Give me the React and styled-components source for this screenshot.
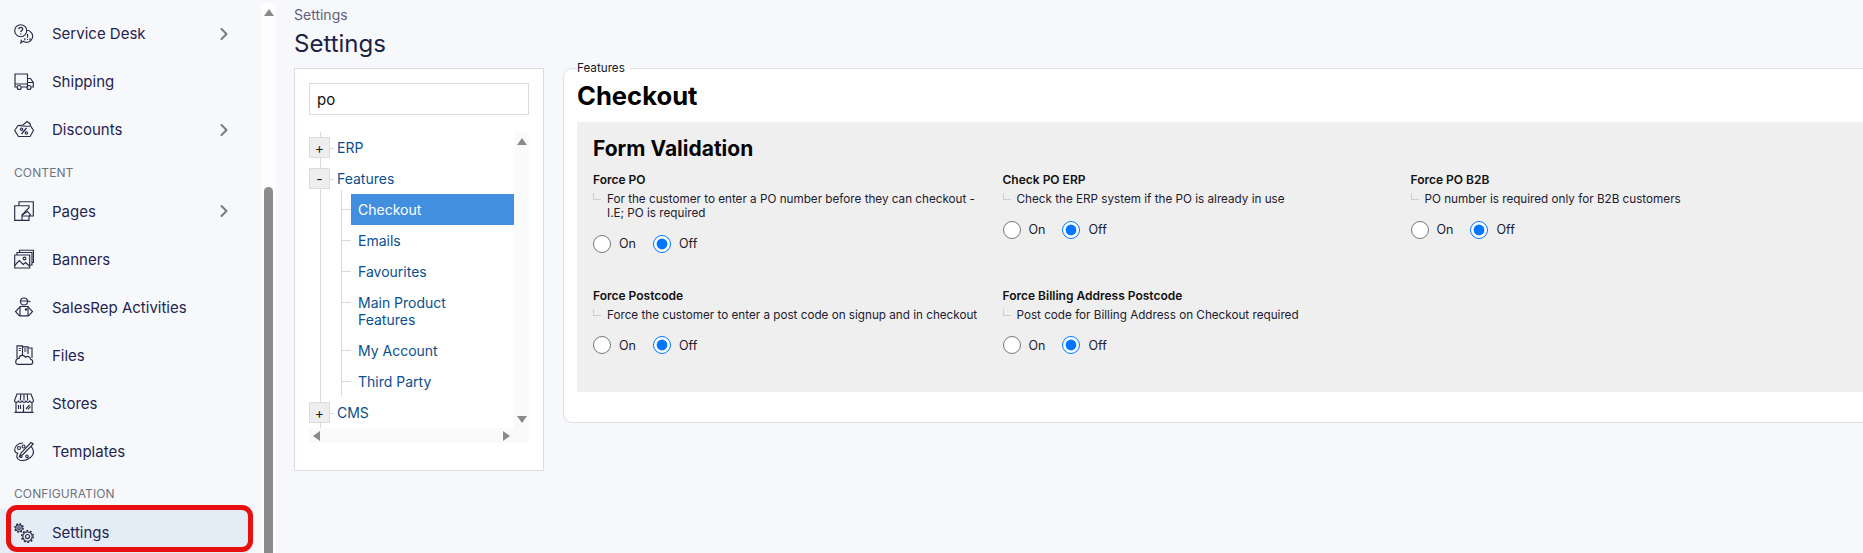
import React from "react";
import styled, { createGlobalStyle } from "styled-components";
import { ChevronRight } from "lucide-react";

const GlobalStyle = createGlobalStyle`
  html, body, #root {
    height: 100%;
    margin: 0;
    overflow: hidden;
  }
  body {
    background: #f7f8fb;
    font-family: Inter, "Liberation Sans", sans-serif;
  }
  * { box-sizing: border-box; }
`;

const icons = {
  service: (
    <>
      <circle cx="6.7" cy="6.7" r="6" />
      <path d="M4.8 5.2c0-2.4 3.9-2.4 3.9-.2 0 1.300-1.900 1.500-1.900 3M6.800 9.400v1" strokeWidth="1.300" />
      <path d="M12.800 6.300a6 6 0 1 1-3.500 11l-2.500 1.600.6-3.300" />
      <path d="M13.500 10v3.800M13.500 15v1M10.800 14.200v2M16 14.200v2" strokeWidth="1.200" />
    </>
  ),
  truck: (
    <>
      <path d="M3 15H1V2h12.500v13H7.500" />
      <path d="M13.500 6.500h3l2.800 4v4.500h-2M13.500 15h-0.500" />
      <path d="M13.500 10.500h5.800M1 12h12.500" />
      <circle cx="5.200" cy="15.500" r="2" />
      <circle cx="15" cy="15.500" r="2" />
    </>
  ),
  discount: (
    <>
      <path d="M0.700 10.500 4 5.500l5-.5 4-3.500 3 2.200 0.500 2 3 4.800-3.500 6H4.500z" />
      <path d="M4 5.500c3 .5 8 1 12.500.5" />
      <path d="M7.500 14l5-6" strokeWidth="1.300" />
      <circle cx="7.600" cy="9.200" r="1.200" />
      <circle cx="12.400" cy="13" r="1.200" />
    </>
  ),
  pages: (
    <>
      <path d="M5 4.500V0.700h14.300V15H15" />
      <path d="M0.700 4.700h14.300v2L8 14v5.300H0.700z" />
      <path d="M8 19.300h7V15" />
      <path d="M8 14l5.500-3.500 3 3.500-1.500 1H8" />
    </>
  ),
  banners: (
    <>
      <path d="M0.700 6h15v13h-15z" />
      <path d="M3 6V3.500h15V16h-2.300" />
      <path d="M5.500 3.500V1.200h14V13.500H18" />
      <path d="M0.700 16.500l4.500-5 4 4 2.500-2 3.500 3.500" />
      <circle cx="10.500" cy="9.500" r="1.400" />
    </>
  ),
  rep: (
    <>
      <circle cx="10" cy="4.500" r="3.500" />
      <path d="M6.500 4h7.500l2.500 0.800" />
      <path d="M6 9.500h8v9.300H6z" />
      <path d="M6 9.800 1.500 14.500l3.500 3.800h1M14 9.800l4.500 4.700-3.500 3.800h-1" />
      <circle cx="12" cy="12.500" r="0.700" />
    </>
  ),
  files: (
    <>
      <path d="M3 13V0.800h5.500V10M8.500 1.800h5.500V9M14 3h4v10" />
      <path d="M4.800 3.500h2M4.800 5.500h2M10 4h2.500M10 6h2.500" />
      <path d="M3.500 19.300h13c3 0 3-4.500 0-5 0-3-3.500-3.500-5-2-1.500-3-6-2.500-6.500 1-3.500 0-4.500 5.500-1.500 6z" />
    </>
  ),
  store: (
    <>
      <path d="M3 1h14l2.500 6.500c0 2.500-3.500 2.500-3.800 0 0 2.500-3.400 2.500-3.700 0 0 2.500-3.700 2.500-4 0 0 2.500-3.400 2.500-3.700 0 0 2.500-3.800 2.500-3.800 0z" />
      <path d="M6.800 1 6.300 7.500M10 1v6.500M13.200 1l.5 6.500" />
      <path d="M2 9.500v9.800h16V9.500M0.500 19.300h19" />
      <path d="M9.500 11.500v7.800M4.500 12v4M6.500 12v4M12 16l3.500-4M14 16.500l2.500-3" />
    </>
  ),
  palette: (
    <>
      <path d="M9 2C4 2 .7 5.500.7 9c0 2.500 2 3 3 3.200C2.500 14.500 2 18 6 19.300c4 .8 10-1 12.500-5 1.500-3 1-6.500-1.500-9" />
      <path d="M17 1.500 19.300 3 9 13.500l-3.500 2 1.500-3.500z" />
      <circle cx="5" cy="7" r="1.500" />
      <circle cx="9.500" cy="5.500" r="1.500" />
      <circle cx="7" cy="15.500" r="1.100" />
      <circle cx="13" cy="15.300" r="1.300" />
    </>
  ),
  settings: (
    <>
      <circle cx="5" cy="5" r="4.200" strokeWidth="1.500" strokeDasharray="1.650 1.650" />
      <circle cx="5" cy="5" r="3.200" />
      <circle cx="5" cy="5" r="1.300" />
      <circle cx="13.500" cy="13.500" r="5.800" strokeWidth="1.500" strokeDasharray="1.820 1.820" />
      <circle cx="13.500" cy="13.500" r="4.700" />
      <circle cx="13.500" cy="13.500" r="2" />
    </>
  ),
};

const NavIcon = ({ name }) => (
  <IconSvg viewBox="0 0 20 20" fill="none" stroke="currentColor" strokeWidth="1.150">
    {icons[name]}
  </IconSvg>
);

const navGroups = [
  {
    items: [
      { label: "Service Desk", icon: "service", more: true },
      { label: "Shipping", icon: "truck" },
      { label: "Discounts", icon: "discount", more: true },
    ],
  },
  {
    title: "Content",
    items: [
      { label: "Pages", icon: "pages", more: true },
      { label: "Banners", icon: "banners" },
      { label: "SalesRep Activities", icon: "rep" },
      { label: "Files", icon: "files" },
      { label: "Stores", icon: "store" },
      { label: "Templates", icon: "palette" },
    ],
  },
  {
    title: "Configuration",
    items: [{ label: "Settings", icon: "settings", active: true }],
  },
];

const featureChildren = [
  { label: "Checkout", selected: true },
  { label: "Emails" },
  { label: "Favourites" },
  { label: <>Main Product<br />Features</> },
  { label: "My Account" },
  { label: "Third Party" },
];

const fields = [
  {
    id: "force-po",
    title: "Force PO",
    text: <>For the customer to enter a PO number before they can checkout -<br />I.E; PO is required</>,
  },
  { id: "check-po", title: "Check PO ERP", text: "Check the ERP system if the PO is already in use" },
  { id: "po-b2b", title: "Force PO B2B", text: "PO number is required only for B2B customers" },
  { id: "postcode", title: "Force Postcode", text: "Force the customer to enter a post code on signup and in checkout" },
  { id: "billing", title: "Force Billing Address Postcode", text: "Post code for Billing Address on Checkout required" },
];

const App = () => {
  return (
    <Page>
      <GlobalStyle />
      <Sidebar>
        {navGroups.map((group, i) => (
          <div key={i}>
            {group.title && <NavTitle>{group.title}</NavTitle>}
            {group.items.map((item) => (
              <NavRow key={item.label} $active={item.active}>
                <NavIcon name={item.icon} />
                <NavLabel>{item.label}</NavLabel>
                {item.more && <ChevronRight size={20} strokeWidth={2.4} color="#777a80" />}
              </NavRow>
            ))}
          </div>
        ))}
      </Sidebar>
      <SideScroll>
        <Arrow $dir="up" />
        <SideThumb />
      </SideScroll>

      <Main>
        <Crumb>Settings</Crumb>
        <Title>Settings</Title>
        <Panels>
          <TreePanel>
            <Search defaultValue="po" />
            <TreeBox>
              <TreeArea>
                <TreeNode>
                  <Toggle>+</Toggle>
                  <NodeLabel>ERP</NodeLabel>
                </TreeNode>
                <TreeNode>
                  <Toggle>-</Toggle>
                  <NodeLabel>Features</NodeLabel>
                </TreeNode>
                <SubList>
                  {featureChildren.map((child, i) => (
                    <SubNode key={i} $selected={child.selected}>
                      {child.label}
                    </SubNode>
                  ))}
                </SubList>
                <TreeNode>
                  <Toggle>+</Toggle>
                  <NodeLabel>CMS</NodeLabel>
                </TreeNode>
              </TreeArea>
              <TreeScrollY>
                <Arrow $dir="up" />
                <Arrow $dir="down" />
              </TreeScrollY>
              <TreeScrollX>
                <Arrow $dir="left" />
                <Arrow $dir="right" />
              </TreeScrollX>
            </TreeBox>
          </TreePanel>

          <FeaturePanel>
            <Legend>Features</Legend>
            <FeatureTitle>Checkout</FeatureTitle>
            <FormSection>
              <SectionTitle>Form Validation</SectionTitle>
              <FieldGrid>
                {fields.map((field) => (
                  <Field key={field.id}>
                    <FieldTitle>{field.title}</FieldTitle>
                    <FieldText>{field.text}</FieldText>
                    <RadioRow>
                      <RadioLabel>
                        <input type="radio" name={field.id} />
                        On
                      </RadioLabel>
                      <RadioLabel>
                        <input type="radio" name={field.id} defaultChecked />
                        Off
                      </RadioLabel>
                    </RadioRow>
                  </Field>
                ))}
              </FieldGrid>
            </FormSection>
          </FeaturePanel>
        </Panels>
      </Main>
    </Page>
  );
};

export default App;

const Page = styled.div`
  display: flex;
  height: 553px;
  overflow: hidden;
  color: #1d2242;
`;

const Sidebar = styled.nav`
  flex: 0 0 261px;
  padding-top: 9.5px;
  overflow: hidden;
`;

const NavTitle = styled.div`
  height: 33.5px;
  padding: 11px 0 0 14px;
  font-size: 12px;
  line-height: 15px;
  letter-spacing: 0.1px;
  color: #6d7481;
  text-transform: uppercase;
`;

const NavRow = styled.div`
  display: flex;
  align-items: center;
  height: 48px;
  margin-right: ${(p) => (p.$active ? "13px" : "0")};
  padding: 0 ${(p) => (p.$active ? "14px" : "27px")} 0 14px;
  font-size: 15px;
  color: #1f2550;
  position: relative;
  background: ${(p) => (p.$active ? "#e4ecf5" : "transparent")};

  ${(p) =>
    p.$active &&
    `
    &::after {
      content: "";
      box-sizing: border-box;
      position: absolute;
      left: 6px;
      top: -3.500px;
      width: 247px;
      height: 47px;
      border: 5px solid #e80f0f;
      border-radius: 11px;
    }
  `}
`;

const IconSvg = styled.svg`
  flex: none;
  width: 20px;
  height: 20px;
  color: #2a2b48;
`;

const NavLabel = styled.span`
  flex: 1;
  margin-left: 18px;
`;

const SideScroll = styled.div`
  flex: 0 0 15px;
  position: relative;
  margin-top: 3px;
  background: #fdfdfd;
`;

const SideThumb = styled.div`
  position: absolute;
  left: 3px;
  top: 184px;
  width: 9px;
  height: 400px;
  background: #8c8c8c;
  border-radius: 5px 5px 0 0;
`;

const arrowShapes = {
  up: "border-width: 0 5px 7px; border-color: transparent transparent #8a8a8a; top: 6px; left: 2.500px;",
  down: "border-width: 7px 5px 0; border-color: #8a8a8a transparent transparent; bottom: 5px; left: 2.500px;",
  left: "border-width: 5px 7px 5px 0; border-color: transparent #8a8a8a transparent transparent; left: 4px; top: 2.500px;",
  right: "border-width: 5px 0 5px 7px; border-color: transparent transparent transparent #8a8a8a; right: 19px; top: 2.500px;",
};

const Arrow = styled.span`
  position: absolute;
  width: 0;
  height: 0;
  border-style: solid;
  ${(p) => arrowShapes[p.$dir]}
`;

const Main = styled.main`
  flex: 1;
  min-width: 0;
  padding-left: 18px;
`;

const Crumb = styled.div`
  padding-top: 6px;
  font-size: 14px;
  line-height: 17px;
  color: #5d6180;
`;

const Title = styled.h1`
  margin: 6px 0 0;
  font-size: 24px;
  font-weight: 400;
  line-height: 30px;
  color: #1d2242;
`;

const Panels = styled.div`
  display: flex;
  align-items: flex-start;
  gap: 19px;
  margin-top: 9px;
`;

const TreePanel = styled.section`
  flex: 0 0 249px;
  height: 403px;
  padding: 14px;
  background: #fff;
  border: 1px solid #dcdcdf;
`;

const Search = styled.input`
  display: block;
  width: 220px;
  height: 32px;
  padding: 0 7px;
  border: 1px solid #dcdcdc;
  background: #fff;
  color: #111;
  font: 15px Inter, "Liberation Sans", sans-serif;
  outline: none;
`;

const TreeBox = styled.div`
  display: grid;
  grid-template-columns: 205px 15px;
  grid-template-rows: 296px 15px;
  margin-top: 17px;
`;

const TreeArea = styled.div`
  position: relative;
  overflow: hidden;
  font-size: 14px;

  &::before {
    content: "";
    position: absolute;
    left: 11px;
    top: 0;
    bottom: 0;
    width: 1px;
    background: #dadada;
  }
`;

const TreeNode = styled.div`
  display: flex;
  align-items: center;
  height: 31px;
  position: relative;
`;

const Toggle = styled.span`
  display: flex;
  align-items: center;
  justify-content: center;
  width: 21px;
  height: 21px;
  position: relative;
  background: #eee;
  border: 1px solid #dcdcdc;
  font-size: 14px;
  color: #222;
`;

const NodeLabel = styled.span`
  margin-left: 7px;
  color: #0b4f8c;
  position: relative;

  &::before {
    content: "";
    position: absolute;
    left: -7px;
    top: 50%;
    width: 4px;
    height: 1px;
    background: #dadada;
  }
`;

const SubList = styled.div`
  position: relative;
  padding-left: 42px;

  &::before {
    content: "";
    position: absolute;
    left: 32px;
    top: -4px;
    bottom: 1px;
    width: 1px;
    background: #dadada;
  }
`;

const SubNode = styled.div`
  position: relative;
  padding: 7px 0 7px 7px;
  line-height: 17px;
  color: ${(p) => (p.$selected ? "#fff" : "#0b4f8c")};
  background: ${(p) => (p.$selected ? "#428fdf" : "transparent")};

  &::before {
    content: "";
    position: absolute;
    left: -9px;
    top: 15px;
    width: 9px;
    height: 1px;
    background: #dadada;
  }
`;

const TreeScrollY = styled.div`
  position: relative;
  background: #fafafa;
`;

const TreeScrollX = styled.div`
  grid-column: 1 / 3;
  position: relative;
  background: #fafafa;
`;

const FeaturePanel = styled.fieldset`
  flex: 1;
  min-width: 0;
  height: 364px;
  margin: -9px 0 0;
  padding: 0 0 30px 13px;
  background: #fff;
  background-clip: padding-box;
  border: 1px solid #dfe0e5;
  border-right: none;
  border-radius: 9px 0 0 9px;
`;

const Legend = styled.legend`
  margin-left: 0;
  padding: 0 5px 0 0;
  font-size: 11.700px;
  line-height: 18px;
  color: #1a1a2a;
`;

const FeatureTitle = styled.h2`
  margin: 1px 0 0;
  font-size: 25.600px;
  font-weight: 700;
  line-height: 36px;
  color: #000;
`;

const FormSection = styled.section`
  height: 270px;
  margin-top: 7.500px;
  padding: 15.500px 0 0 16px;
  background: #efefef;
`;

const SectionTitle = styled.h3`
  margin: 0;
  font-size: 21px;
  font-weight: 700;
  line-height: 24px;
  color: #050505;
`;

const FieldGrid = styled.div`
  display: grid;
  grid-template-columns: 409.500px 408px 1fr;
  row-gap: 35px;
  margin-top: 11px;
`;

const Field = styled.div`
  min-width: 0;
`;

const FieldTitle = styled.div`
  font-size: 12px;
  font-weight: 600;
  line-height: 16px;
  color: #111;
`;

const FieldText = styled.div`
  position: relative;
  margin-top: 4px;
  padding-left: 14px;
  font-size: 11.700px;
  line-height: 14px;
  color: #1d2030;

  &::before {
    content: "";
    position: absolute;
    left: 0;
    top: 1px;
    width: 7px;
    height: 6px;
    border-left: 1px solid #cfcfcf;
    border-bottom: 1px solid #cfcfcf;
  }
`;

const RadioRow = styled.div`
  display: flex;
  gap: 17px;
  margin-top: 14.500px;
`;

const RadioLabel = styled.label`
  display: flex;
  align-items: center;
  gap: 8px;
  font-size: 12.500px;
  color: #1d2030;

  input {
    width: 18px;
    height: 18px;
    margin: 0;
  }
`;
